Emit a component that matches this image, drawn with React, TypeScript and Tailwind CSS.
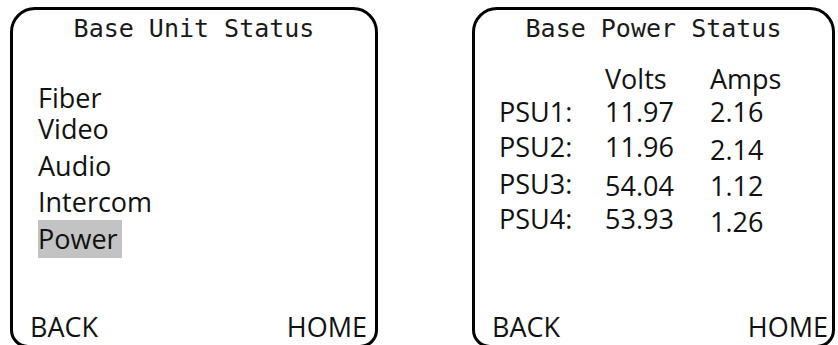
import React from 'react';

const menuItems = [
  { label: 'Fiber', h: 'h-[31px]' },
  { label: 'Video', h: 'h-[37px]' },
  { label: 'Audio', h: 'h-[36px]' },
  { label: 'Intercom', h: 'h-[37px]' },
];

const psuRows = [
  { name: 'PSU1:', volts: '11.97', amps: '2.16', h: 'h-[35px]', vOff: '', aOff: '' },
  { name: 'PSU2:', volts: '11.96', amps: '2.14', h: 'h-[37px]', vOff: '', aOff: 'translate-y-[3px]' },
  { name: 'PSU3:', volts: '54.04', amps: '1.12', h: 'h-[35px]', vOff: 'translate-y-[2px]', aOff: 'translate-y-[2px]' },
  { name: 'PSU4:', volts: '53.93', amps: '1.26', h: 'h-[36px]', vOff: '', aOff: 'translate-y-[3px]' },
];

const Screen = ({ title, width, children }: { title: string; width: string; children: React.ReactNode }) => (
  <div className={`${width} h-[341px] mt-[7px] border-[3px] border-black rounded-t-[25px] rounded-b-[18px] flex flex-col`}>
    <div className="pt-[6px] text-center text-[25px] leading-[25px] text-[#1a1a1a] font-['DejaVu_Sans_Mono',monospace]">
      {title}
    </div>
    {children}
  </div>
);

const Footer = ({ pr }: { pr: string }) => (
  <div className={`mt-auto flex justify-between pl-[17px] ${pr} pb-[5px] text-[27px] leading-[27px]`}>
    <span>BACK</span>
    <span>HOME</span>
  </div>
);

export default function App() {
  return (
    <div className="w-[838px] h-[345px] overflow-hidden bg-white text-[#111] font-['Open_Sans',sans-serif] flex">
      <div className="ml-[10px]">
        <Screen title="Base Unit Status" width="w-[368px]">
          <div className="mt-[39px] pl-[25px] text-[27px] leading-[36px] flex flex-col">
            {menuItems.map((item) => (
              <div key={item.label} className={item.h}>
                {item.label}
              </div>
            ))}
            <div>
              <span className="inline-block bg-[#c3c3c3] pr-[4px] leading-[38px] -mt-[1px]">Power</span>
            </div>
          </div>
          <Footer pr="pr-[8px]" />
        </Screen>
      </div>

      <div className="ml-[94px]">
        <Screen title="Base Power Status" width="w-[363px]">
          <div className="mt-[20px] pl-[24px] text-[27px] leading-[36px] flex flex-col">
            <div className="grid grid-cols-[106px_105px_auto] h-[33px]">
              <span />
              <span>Volts</span>
              <span>Amps</span>
            </div>
            {psuRows.map((row) => (
              <div key={row.name} className={`grid grid-cols-[106px_105px_auto] ${row.h}`}>
                <span>{row.name}</span>
                <span className={row.vOff}>{row.volts}</span>
                <span className={row.aOff}>{row.amps}</span>
              </div>
            ))}
          </div>
          <Footer pr="pr-[4px]" />
        </Screen>
      </div>
    </div>
  );
}
